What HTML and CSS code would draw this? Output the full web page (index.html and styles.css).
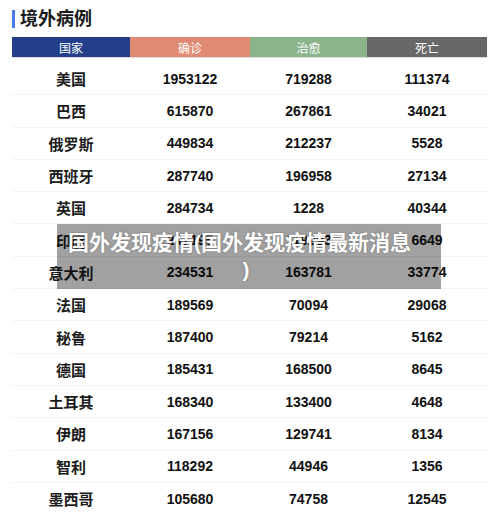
FILE: index.html
```html
<!DOCTYPE html>
<html lang="zh">
<head>
<meta charset="utf-8">
<link rel="stylesheet" href="styles.css">
</head>
<body>
<div class="page">
  <h1 class="title"><span class="title-bar"></span>境外病例</h1>
  <div class="table">
    <div class="head">
      <div class="hc h-country">国家</div>
      <div class="hc h-confirm">确诊</div>
      <div class="hc h-cure">治愈</div>
      <div class="hc h-death">死亡</div>
    </div>
    <div class="body">
      <div class="row"><div class="c name">美国</div><div class="c">1953122</div><div class="c">719288</div><div class="c">111374</div></div>
      <div class="row"><div class="c name">巴西</div><div class="c">615870</div><div class="c">267861</div><div class="c">34021</div></div>
      <div class="row"><div class="c name">俄罗斯</div><div class="c">449834</div><div class="c">212237</div><div class="c">5528</div></div>
      <div class="row"><div class="c name">西班牙</div><div class="c">287740</div><div class="c">196958</div><div class="c">27134</div></div>
      <div class="row"><div class="c name">英国</div><div class="c">284734</div><div class="c">1228</div><div class="c">40344</div></div>
      <div class="row"><div class="c name">印度</div><div class="c">247195</div><div class="c">119293</div><div class="c">6649</div></div>
      <div class="row"><div class="c name">意大利</div><div class="c">234531</div><div class="c">163781</div><div class="c">33774</div></div>
      <div class="row"><div class="c name">法国</div><div class="c">189569</div><div class="c">70094</div><div class="c">29068</div></div>
      <div class="row"><div class="c name">秘鲁</div><div class="c">187400</div><div class="c">79214</div><div class="c">5162</div></div>
      <div class="row"><div class="c name">德国</div><div class="c">185431</div><div class="c">168500</div><div class="c">8645</div></div>
      <div class="row"><div class="c name">土耳其</div><div class="c">168340</div><div class="c">133400</div><div class="c">4648</div></div>
      <div class="row"><div class="c name">伊朗</div><div class="c">167156</div><div class="c">129741</div><div class="c">8134</div></div>
      <div class="row"><div class="c name">智利</div><div class="c">118292</div><div class="c">44946</div><div class="c">1356</div></div>
      <div class="row"><div class="c name">墨西哥</div><div class="c">105680</div><div class="c">74758</div><div class="c">12545</div></div>
    </div>
  </div>
  <div class="overlay">
    <div class="ol-line1">国外发现疫情(国外发现疫情最新消息</div>
    <div class="ol-line2">)</div>
  </div>
</div>
</body>
</html>
```
FILE: styles.css
```css
* { box-sizing: border-box; }
html, body { margin: 0; padding: 0; background: #fff; }
body { font-family: "Liberation Sans", "Noto Sans CJK SC", sans-serif; overflow: hidden; }
.page { position: relative; width: 500px; height: 514px; padding: 9px 13px 0 12px; }
.title {
  display: flex; align-items: center;
  margin: 0; height: 20px;
  font-size: 18px; font-weight: bold; color: #1a1a1a; line-height: 20px;
}
.title-bar { width: 3px; height: 18px; background: #4a7cf0; margin-right: 5px; }
.table { margin-top: 8px; }
.head { display: grid; grid-template-columns: 118px 120px 117px 120px; height: 20px; box-shadow: 0 1px 1px rgba(0,0,0,0.12); }
.hc { display: flex; align-items: center; justify-content: center; color: #fff; font-size: 12px; }
.h-country { background: #233f89; }
.h-confirm { background: #e08a73; }
.h-cure { background: #8bb48b; }
.h-death { background: #686868; }
.body { margin-top: 6px; }
.row {
  display: grid; grid-template-columns: 118px 120px 117px 120px;
  height: 32.3px; border-bottom: 1px solid #f3f3f3;
}
.c { display: flex; align-items: center; justify-content: center; font-size: 14px; font-weight: bold; color: #111; }
.name { font-size: 15px; color: #1c1c1c; }
.overlay {
  position: absolute; left: 57px; top: 224px; width: 384px; height: 65px;
  background: rgba(0,0,0,0.37);
  color: #fff; font-size: 21px; font-weight: bold; line-height: 27px;
  padding: 5px 0 0 11px;
  text-shadow: 0 0 2px rgba(0,0,0,0.35);
}
.ol-line1 { white-space: nowrap; }
.ol-line2 { text-align: center; padding-right: 17px; }
```
